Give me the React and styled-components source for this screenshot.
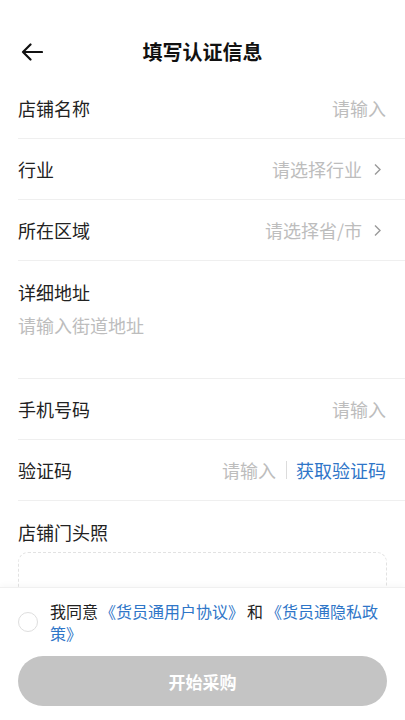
import React from 'react';
import styled, { createGlobalStyle } from 'styled-components';

const Global = createGlobalStyle`
  html, body {
    margin: 0;
    padding: 0;
    background: #fff;
    font-family: "Noto Sans CJK SC", "Noto Sans", sans-serif;
  }
  * { box-sizing: border-box; }
`;

const Page = styled.div`
  width: 405px;
  height: 720px;
  overflow: hidden;
  position: relative;
  background: #fff;
`;

const Header = styled.div`
  height: 78px;
  padding-top: 26px;
  display: flex;
  align-items: center;
  position: relative;
`;

const Back = styled.button`
  position: absolute;
  left: 18px;
  top: 38px;
  width: 28px;
  height: 28px;
  padding: 0;
  border: none;
  background: none;
  display: flex;
  align-items: center;
  justify-content: center;
`;

const Title = styled.h1`
  flex: 1;
  margin: 0;
  text-align: center;
  font-size: 20px;
  font-weight: 700;
  color: #111;
  line-height: 52px;
  height: 52px;
`;

const Form = styled.div`
  padding-left: 18px;
`;

const Row = styled.div`
  display: flex;
  align-items: center;
  justify-content: space-between;
  height: 61px;
  padding-right: 19px;
  border-bottom: 1px solid #efefef;
`;

const Label = styled.div`
  font-size: 18px;
  color: #222;
  line-height: 22px;
`;

const Placeholder = styled.div`
  font-size: 18px;
  color: #bdbdbd;
  line-height: 22px;
  display: flex;
  align-items: center;
`;

const Chevron = styled.span`
  display: inline-flex;
  margin-left: 11px;
`;

const BlockRow = styled.div`
  padding: 20px 19px 0 0;
  height: 118px;
  border-bottom: 1px solid #efefef;
`;

const AreaHint = styled.div`
  margin-top: 11px;
  font-size: 18px;
  color: #bdbdbd;
  line-height: 22px;
`;

const CodeGroup = styled.div`
  display: flex;
  align-items: center;
`;

const Sep = styled.span`
  width: 1px;
  height: 18px;
  background: #dcdcdc;
  margin: 0 9px 0 10px;
`;

const Link = styled.span`
  color: #2f76c8;
  font-size: ${({ small }) => (small ? '16px' : '18px')};
  line-height: 22px;
`;

const PhotoSection = styled.div`
  padding: 20px 18px 0 0;
`;

const UploadBox = styled.div`
  margin-top: 9px;
  height: 130px;
  border: 1.5px dashed #e2e2e2;
  border-radius: 10px;
`;

const Footer = styled.div`
  position: absolute;
  left: 0;
  right: 0;
  bottom: 0;
  height: 133px;
  background: #fff;
  border-top: 1px solid #f0f0f0;
  box-shadow: 0 -2px 6px rgba(0, 0, 0, 0.03);
  padding: 12px 18px 0 18px;
`;

const Agree = styled.div`
  display: flex;
  align-items: center;
`;

const Radio = styled.span`
  flex: none;
  width: 20px;
  height: 20px;
  border-radius: 50%;
  border: 1px solid #dedede;
  margin-right: 12px;
`;

const AgreeText = styled.div`
  font-size: 16px;
  line-height: 22px;
  color: #222;
`;

const Gap = styled.span`
  display: inline-block;
  width: ${({ w }) => w}px;
`;

const SubmitButton = styled.button`
  display: block;
  width: 100%;
  height: 50px;
  margin-top: 12px;
  border: none;
  border-radius: 25px;
  background: #c4c4c4;
  color: #fff;
  font-family: inherit;
  font-size: 17px;
  font-weight: 700;
`;

const ChevronIcon = () => (
  <svg width="13" height="13" viewBox="0 0 13 13">
    <path d="M2 1.5 L7 6.5 L2 11.5" fill="none" stroke="#9a9a9a" strokeWidth="1.4" />
  </svg>
);

const BackIcon = () => (
  <svg width="22" height="18" viewBox="0 0 22 18">
    <path d="M21 9 H2 M9.5 1.5 L2 9 L9.5 16.5" fill="none" stroke="#111" strokeWidth="2.2" strokeLinecap="round" strokeLinejoin="round" />
  </svg>
);

export default function App() {
  return (
    <Page>
      <Global />
      <Header>
        <Back><BackIcon /></Back>
        <Title>填写认证信息</Title>
      </Header>
      <Form>
        <Row>
          <Label>店铺名称</Label>
          <Placeholder>请输入</Placeholder>
        </Row>
        <Row>
          <Label>行业</Label>
          <Placeholder>请选择行业<Chevron><ChevronIcon /></Chevron></Placeholder>
        </Row>
        <Row>
          <Label>所在区域</Label>
          <Placeholder>请选择省/市<Chevron><ChevronIcon /></Chevron></Placeholder>
        </Row>
        <BlockRow>
          <Label>详细地址</Label>
          <AreaHint>请输入街道地址</AreaHint>
        </BlockRow>
        <Row>
          <Label>手机号码</Label>
          <Placeholder>请输入</Placeholder>
        </Row>
        <Row>
          <Label>验证码</Label>
          <CodeGroup>
            <Placeholder>请输入</Placeholder>
            <Sep />
            <Link>获取验证码</Link>
          </CodeGroup>
        </Row>
        <PhotoSection>
          <Label>店铺门头照</Label>
          <UploadBox />
        </PhotoSection>
      </Form>
      <Footer>
        <Agree>
          <Radio />
          <AgreeText>
            我同意<Gap w={2} /><Link small>《货员通用户协议》</Link><Gap w={3} />和<Gap w={3} /><Link small>《货员通隐私政策》</Link>
          </AgreeText>
        </Agree>
        <SubmitButton>开始采购</SubmitButton>
      </Footer>
    </Page>
  );
}
